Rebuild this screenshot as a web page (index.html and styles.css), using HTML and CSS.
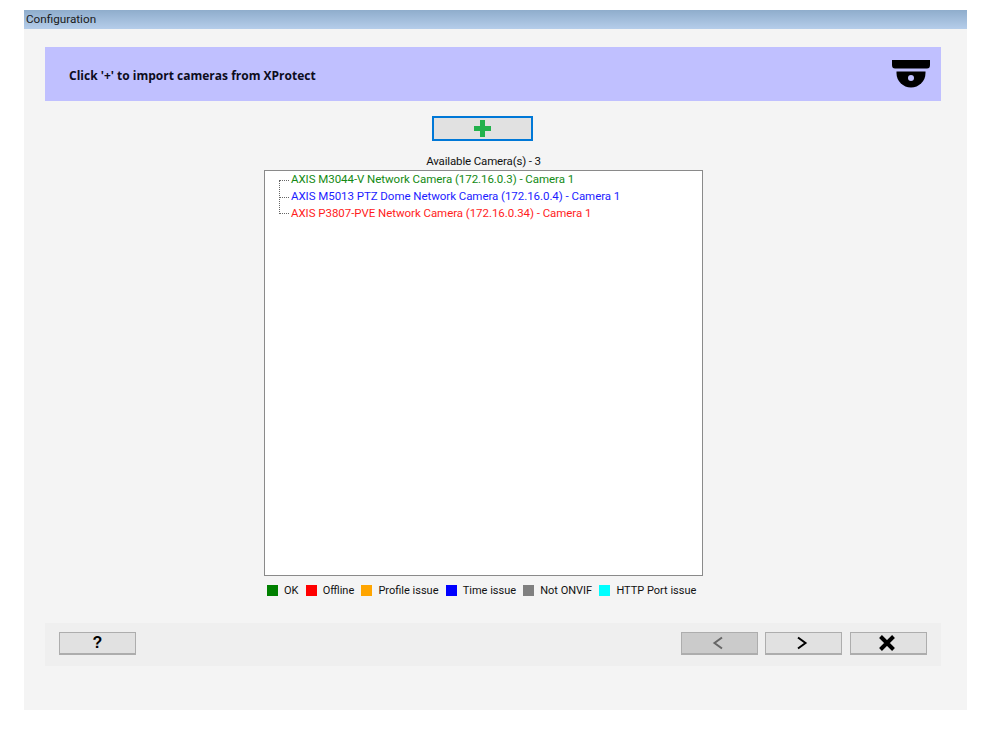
FILE: index.html
```html
<!DOCTYPE html>
<html lang="en">
<head>
<meta charset="utf-8">
<title>Configuration</title>
<link rel="stylesheet" href="styles.css">
</head>
<body>
<div class="window">
  <div class="titlebar">Configuration</div>
  <div class="content">
    <div class="banner">
      <span class="banner-text">Click '+' to import cameras from XProtect</span>
      <svg class="cam" width="38" height="28" viewBox="0 0 38 28">
        <path d="M0 0H38V5Q38 8.500 35 8.500H3Q0 8.500 0 5Z" fill="#000"/>
        <path d="M4.500 11.500H33.500V13A14.500 14.500 0 0 1 4.500 13Z" fill="#000"/>
        <circle cx="19" cy="18" r="3" fill="#c0c0ff"/>
      </svg>
    </div>
    <div class="center-col">
      <button class="btn btn-add" type="button">
        <svg width="17" height="17" viewBox="0 0 17 17"><path d="M6 0H11V6H17V11H11V17H6V11H0V6H6Z" fill="#22b14c"/></svg>
      </button>
      <div class="avail">Available Camera(s) - 3</div>
      <div class="tree">
        <div class="tree-lines"></div>
        <div class="node green">AXIS M3044-V Network Camera (172.16.0.3) - Camera 1</div>
        <div class="node blue">AXIS M5013 PTZ Dome Network Camera (172.16.0.4) - Camera 1</div>
        <div class="node red">AXIS P3807-PVE Network Camera (172.16.0.34) - Camera 1</div>
      </div>
      <div class="legend">
        <span class="item"><i class="sw s-ok"></i>OK</span>
        <span class="item"><i class="sw s-off"></i>Offline</span>
        <span class="item"><i class="sw s-pro"></i>Profile issue</span>
        <span class="item"><i class="sw s-time"></i>Time issue</span>
        <span class="item"><i class="sw s-onv"></i>Not ONVIF</span>
        <span class="item"><i class="sw s-http"></i>HTTP Port issue</span>
      </div>
    </div>
    <div class="footer">
      <button class="btn nav help" type="button">?</button>
      <div class="nav-group">
        <button class="btn nav icon-btn disabled" type="button">
          <svg width="12" height="14" viewBox="0 0 12 14"><path d="M10 1.500L2.500 7L10 12.500" fill="none" stroke="#666" stroke-width="2"/></svg>
        </button>
        <button class="btn nav icon-btn" type="button">
          <svg width="12" height="14" viewBox="0 0 12 14"><path d="M2 1.500L9.500 7L2 12.500" fill="none" stroke="#000" stroke-width="2"/></svg>
        </button>
        <button class="btn nav icon-btn close" type="button">
          <svg width="18" height="16" viewBox="0 0 18 16"><path d="M2.500 1.500L15.500 14.500M15.500 1.500L2.500 14.500" fill="none" stroke="#000" stroke-width="4"/></svg>
        </button>
      </div>
    </div>
  </div>
</div>
</body>
</html>
```

FILE: styles.css
```css
html, body { margin: 0; padding: 0; background: #fff; }
body { width: 987px; height: 729px; overflow: hidden; font-family: "Roboto", "Liberation Sans", sans-serif; font-size: 11.500px; color: #111; }
.window { margin: 10px 0 0 24px; width: 943px; height: 700px; background: #f4f4f4; display: flex; flex-direction: column; }
.titlebar { height: 19px; line-height: 18px; padding-left: 2px; background: linear-gradient(#8fadcc, #b5cdea); font-size: 11.700px; color: #1a1a1a; flex: none; }
.content { padding: 18px 26px 0 21px; display: flex; flex-direction: column; flex: 1; }
.banner { height: 54px; background: #c0c0ff; display: flex; align-items: center; justify-content: space-between; padding: 0 11px 0 24px; flex: none; }
.banner-text { font-family: "Open Sans", sans-serif; font-weight: 700; font-size: 12px; padding-top: 3px; color: #0c0c20; }
.cam { margin-top: -1px; }
.center-col { width: 439px; margin-left: 219px; display: flex; flex-direction: column; align-items: center; flex: none; }
.btn { display: flex; align-items: center; justify-content: center; padding: 0; background: #e1e1e1; border: 1px solid #adadad; border-bottom-width: 2px; box-sizing: border-box; }
.btn-add { width: 101px; height: 25px; margin-top: 15px; margin-right: 2px; border: 2px solid #0078d7; }
.avail { height: 14px; line-height: 14px; margin-top: 13px; margin-bottom: 2px; color: #111; letter-spacing: -0.150px; }
.tree { width: 439px; height: 406px; box-sizing: border-box; border: 1px solid #8a8a8a; background: #fff; position: relative; padding-top: 1px; flex: none; }
.tree-lines { position: absolute; left: 14px; top: 9px; width: 10px; height: 34px; border-left: 1px dotted #666; background:
  repeating-linear-gradient(90deg, #666 0 1px, transparent 1px 2px) 0 0/10px 1px no-repeat,
  repeating-linear-gradient(90deg, #666 0 1px, transparent 1px 2px) 0 17px/10px 1px no-repeat,
  repeating-linear-gradient(90deg, #666 0 1px, transparent 1px 2px) 0 33px/10px 1px no-repeat; }
.node { height: 17px; line-height: 15px; padding-left: 26px; white-space: nowrap; letter-spacing: -0.050px; }
.green { color: #138a13; }
.blue { color: #1c1cff; }
.red { color: #ff1c1c; }
.legend { display: flex; align-self: flex-start; margin: 8px 0 0 3px; height: 12px; align-items: center; font-size: 11px; }
.item { display: flex; align-items: center; margin-right: 7.200px; white-space: nowrap; }
.sw { width: 11px; height: 11px; margin-right: 6px; display: block; }
.s-ok { background: #008000; }
.s-off { background: #ff0000; }
.s-pro { background: #ffa500; }
.s-time { background: #0000ff; }
.s-onv { background: #808080; }
.s-http { background: #00ffff; }
.footer { height: 43px; margin-top: 27px; background: #efefef; display: flex; justify-content: space-between; align-items: flex-start; padding: 9px 14px; box-sizing: border-box; flex: none; }
.nav-group { display: flex; gap: 7px; }
.nav { width: 77px; height: 23px; }
.icon-btn { padding-right: 3px; }
.close { margin-left: 1px; }
.help { font-family: "Liberation Sans", sans-serif; font-weight: 700; font-size: 16px; color: #000; }
.disabled { background: #cbcbcb; }
```
